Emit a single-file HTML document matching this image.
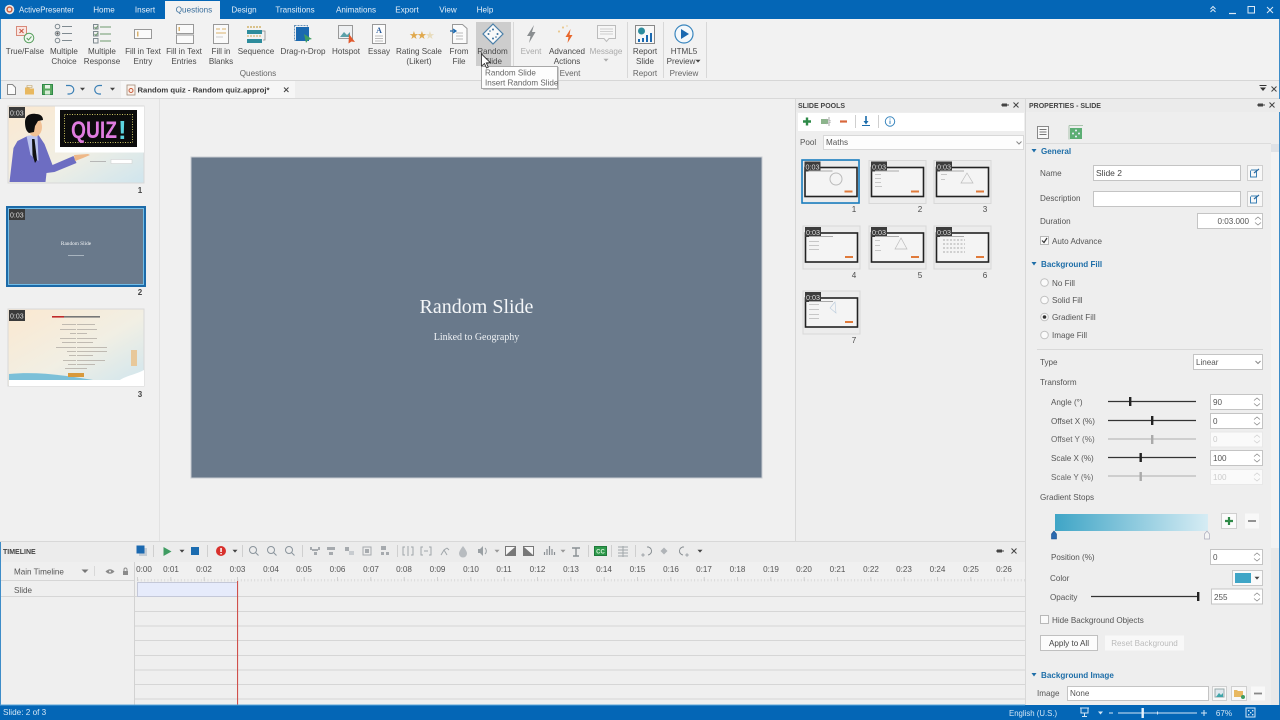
<!DOCTYPE html>
<html><head><meta charset="utf-8"><title>ActivePresenter</title>
<style>
html,body{margin:0;padding:0;width:1280px;height:720px;overflow:hidden;background:#eee}
svg{display:block;position:absolute;left:0;top:0;filter:blur(.35px)}
text{font-family:"Liberation Sans",sans-serif;font-size:8.1px;fill:#4a4a4a}
.c{text-anchor:middle}.r{text-anchor:end}
.w{fill:#e4eef8}.d{fill:#aaa}.b{font-weight:bold;fill:#1e6ea8}.h{font-weight:bold;font-size:7px;fill:#444}
.in{fill:#fff;stroke:#c4c4c4;stroke-width:1}.dis{fill:#fafafa;stroke:#e8e8e8}
.ln{stroke:#555;stroke-width:1;fill:none}.tl{stroke:#d6d6d6;stroke-width:1}
.ic{stroke:#7f8a90;stroke-width:1;fill:none}
</style></head><body>
<svg width="1280" height="720" viewBox="0 0 1280 720" xmlns="http://www.w3.org/2000/svg">
<defs>
<linearGradient id="gr" x1="0" x2="1" y1="0" y2="0"><stop offset="0" stop-color="#3fa5c6"/><stop offset="1" stop-color="#d6ecf4"/></linearGradient>
<linearGradient id="tg" x1="0" x2="1" y1="0" y2="1"><stop offset="0" stop-color="#fbe8d0"/><stop offset=".55" stop-color="#f1efe4"/><stop offset="1" stop-color="#cfe5ee"/></linearGradient>
<pattern id="tk" x="137.5" y="576" width="3.333" height="6" patternUnits="userSpaceOnUse"><rect x="0" y="3" width="1" height="2.500" fill="#dadada"/></pattern>
<g id="pt"><rect x="0" y="0" width="57" height="43" fill="#ececec" stroke="#d8d8d8"/><rect x="2.500" y="7" width="52" height="29" fill="#f4f4f4" stroke="#222" stroke-width="1.600"/><rect x="2" y="1" width="16" height="10" fill="#3c3c3c"/><text x="3" y="9" style="font-size:7.200px;fill:#ddd">0:03</text><rect x="6" y="10" width="24" height="1" fill="#aaa"/><rect x="42" y="30" width="8" height="2" fill="#e07a3a"/></g>
<g id="sp"><path d="M-3 -1.500l3 -2.500 3 2.500M-3 1.500l3 2.500 3 -2.500" fill="none" stroke="#888" stroke-width=".8"/></g>
<g id="dd"><path d="M-2.500 -1.200h5l-2.500 2.800z" fill="#444"/></g>
</defs>

<rect width="1280" height="720" fill="#eeeeee"/>
<rect x="0" y="0" width="1280" height="19" fill="#0466b6"/>
<rect x="0" y="19" width="1280" height="61" fill="#f2f2f2"/>
<rect x="0" y="80" width="1280" height="1" fill="#d6d6d6"/>
<rect x="0" y="81" width="1280" height="17" fill="#eeeeee"/>
<rect x="0" y="98" width="1280" height="1" fill="#d8d8d8"/>
<rect x="165" y="1" width="55" height="19" fill="#f2f2f2"/>
<rect x="0" y="19" width="1" height="686" fill="#3d8cc8"/><rect x="1279" y="19" width="1" height="686" fill="#3d8cc8"/>

<!-- title -->
<circle cx="9.500" cy="9.500" r="4.800" fill="#e9e4e2"/><circle cx="9.500" cy="9.500" r="2.400" fill="none" stroke="#c85a3a" stroke-width="1.400"/>
<text x="19" y="12.500" class="w" textLength="55" lengthAdjust="spacingAndGlyphs">ActivePresenter</text>
<text x="104" y="12.500" class="w c">Home</text><text x="145" y="12.500" class="w c">Insert</text><text x="194" y="12.500" class="c" style="fill:#3a6f9c">Questions</text><text x="244" y="12.500" class="w c">Design</text><text x="295" y="12.500" class="w c">Transitions</text><text x="356" y="12.500" class="w c">Animations</text><text x="407" y="12.500" class="w c">Export</text><text x="448" y="12.500" class="w c">View</text><text x="485" y="12.500" class="w c">Help</text>
<path d="M1210.500 9l2.500 -2.500 2.500 2.500M1210.500 12l2.500 -2.500 2.500 2.500" fill="none" stroke="#dce9f5" stroke-width="1"/>
<path d="M1229 13.500h7" stroke="#dce9f5" stroke-width="1.200"/>
<rect x="1248" y="6.500" width="6.500" height="6.500" fill="none" stroke="#dce9f5"/>
<path d="M1267 7l6 6M1273 7l-6 6" stroke="#dce9f5" stroke-width="1"/>

<!-- ribbon highlight -->
<rect x="476" y="22" width="35" height="44" fill="#cdcdcd"/>

<!-- ribbon icons -->
<rect x="16.500" y="26.500" width="10" height="9" fill="#f9e6e2" stroke="#d88a7a"/><path d="M19.500 29l4 4M23.500 29l-4 4" stroke="#c8503c"/><circle cx="29" cy="38" r="4.800" fill="#eef6ee" stroke="#5aa060"/><path d="M26.700 38l1.800 2 3 -3.500" fill="none" stroke="#5aa060"/>
<g class="ic"><circle cx="57.500" cy="26.500" r="2.300"/><circle cx="57.500" cy="33.500" r="2.300"/><circle cx="57.500" cy="40.500" r="2.300"/><path d="M62 26.500h10M62 33.500h10M62 40.500h10"/></g><circle cx="57.500" cy="33.500" r="1.200" fill="#555"/>
<g class="ic"><rect x="93.500" y="24.500" width="4.500" height="4.500"/><rect x="93.500" y="31.500" width="4.500" height="4.500"/><rect x="93.500" y="38.500" width="4.500" height="4.500"/><path d="M100 27h11M100 34h11M100 41h11M94.500 27l1.500 1.500 2 -3M94.500 34l1.500 1.500 2 -3" stroke="#6f9a6f"/></g>
<rect x="134.500" y="29.500" width="17" height="9" fill="#fafafa" stroke="#999"/><rect x="137" y="31.500" width="1.500" height="5" fill="#d9b26c"/>
<rect x="176.500" y="24.500" width="17" height="9" fill="#fafafa" stroke="#999"/><rect x="176.500" y="35" width="17" height="8.500" fill="#fafafa" stroke="#999"/><rect x="178.500" y="27" width="1.500" height="4" fill="#d9b26c"/>
<rect x="213.500" y="24.500" width="15" height="19" fill="#fafafa" stroke="#999"/><path d="M216 29h4M222 29h4M216 33h10" stroke="#d9b26c"/><path d="M216 37h7" stroke="#ccc"/>
<path d="M247 27h15" stroke="#d9c28c" stroke-width="2" stroke-dasharray="2 1"/><rect x="247" y="30" width="15" height="4" fill="#2d8c9c"/><path d="M247 36h15" stroke="#d9c28c" stroke-width="1.500" stroke-dasharray="2 1"/><rect x="247" y="39" width="15" height="4" fill="#2d8c9c"/><path d="M262 31h3v9h-2" fill="none" stroke="#888" stroke-width=".8"/>
<rect x="294.500" y="25.500" width="13" height="15" fill="none" stroke="#6a93b8" stroke-dasharray="2 1"/><rect x="296" y="27" width="13" height="14" fill="#1b69b0"/><path d="M304 34l8 5 -4 1 -2 3z" fill="#3f9c62"/>
<rect x="338.500" y="25.500" width="14" height="13" fill="#eef0f2" stroke="#999"/><path d="M340 37l4 -5 3 3 3 -3v5z" fill="#5aa0a8"/><path d="M349 34l6 8 -3.500 -.5 -3 2z" fill="#e0582c"/>
<rect x="372.500" y="24.500" width="13" height="19" fill="#fcfcfc" stroke="#999"/><text x="379" y="33" class="c" style="font:bold 8px 'Liberation Serif',serif;fill:#2c5d9c">A</text><path d="M375 36h8M375 38.500h8M375 41h8" stroke="#bbb"/>
<text x="409" y="39" style="font-size:11px;fill:#e0a84c">★</text><text x="417" y="39" style="font-size:11px;fill:#e0a84c">★</text><text x="425" y="39" style="font-size:11px;fill:#e8dcbc">★</text>
<path d="M452.500 24.500h10l4.500 4v15h-14.500z" fill="#fbfbfb" stroke="#999"/><path d="M456 33h7M456 36h7M456 39h7" stroke="#bbb"/><path d="M450 31h6M453 29l3 2 -3 2" fill="none" stroke="#1b69b0" stroke-width="1.200"/>
<path d="M493 24l10 10 -10 10 -10 -10z" fill="#f8f8f8" stroke="#4a7fa8" stroke-width="1.200"/><circle cx="493" cy="29.500" r="1" fill="#3a6f9c"/><circle cx="488.500" cy="34" r="1" fill="#3a6f9c"/><circle cx="497.500" cy="34" r="1" fill="#3a6f9c"/><circle cx="493" cy="38.500" r="1" fill="#3a6f9c"/><circle cx="490" cy="31" r=".8" fill="#3a6f9c"/><circle cx="496" cy="37" r=".8" fill="#3a6f9c"/>
<path d="M534 25l-7 11h3.500l-1.500 7 6.500 -11h-3.500z" fill="#8a8e90"/>
<path d="M570.500 29l-5 8h3l-1 6 5 -8h-3z" fill="#e8672c"/><path d="M563 26l1 1.500 -1 1.500 -1 -1.500zM559 30l1 1.500 -1 1.500 -1 -1.500zM567 25l.7 1 -.7 1 -.7 -1z" fill="#e8c07c"/>
<path d="M597.500 25.500h18v13h-6.500l-2.500 3 -2.500 -3h-6.500z" fill="#f6f6f6" stroke="#bcbcbc"/><path d="M600 29h13M600 31.500h13M600 34h13" stroke="#cfcfcf"/>
<rect x="635.500" y="25.500" width="19" height="18" fill="#f8f8f8" stroke="#888"/><circle cx="641.500" cy="31" r="3.500" fill="#2d8c9c"/><rect x="638" y="39" width="2" height="3" fill="#1b69b0"/><rect x="642" y="38" width="2" height="4" fill="#1b69b0"/><rect x="646" y="35" width="2" height="7" fill="#1b69b0"/><rect x="650" y="33" width="2" height="9" fill="#1b69b0"/>
<circle cx="684" cy="34" r="9" fill="#f4f8fb" stroke="#3a86be" stroke-width="1.200"/><path d="M681 29l8 5 -8 5z" fill="#1b69b0"/>

<!-- ribbon labels -->
<text x="25" y="54" class="c">True/False</text>
<text x="64" y="54" class="c">Multiple</text><text x="64" y="64" class="c">Choice</text>
<text x="102" y="54" class="c">Multiple</text><text x="102" y="64" class="c">Response</text>
<text x="143" y="54" class="c">Fill in Text</text><text x="143" y="64" class="c">Entry</text>
<text x="184" y="54" class="c">Fill in Text</text><text x="184" y="64" class="c">Entries</text>
<text x="221" y="54" class="c">Fill in</text><text x="221" y="64" class="c">Blanks</text>
<text x="256" y="54" class="c">Sequence</text>
<text x="303" y="54" class="c">Drag-n-Drop</text>
<text x="346" y="54" class="c">Hotspot</text>
<text x="379" y="54" class="c">Essay</text>
<text x="419" y="54" class="c">Rating Scale</text><text x="419" y="64" class="c">(Likert)</text>
<text x="459" y="54" class="c">From</text><text x="459" y="64" class="c">File</text>
<text x="492.500" y="54" class="c">Random</text><text x="493" y="64" class="c">Slide</text>
<text x="531" y="54" class="c d">Event</text>
<text x="567" y="54" class="c">Advanced</text><text x="567" y="64" class="c">Actions</text>
<text x="606" y="54" class="c d">Message</text><use href="#dd" x="606" y="60" opacity=".4"/>
<text x="645" y="54" class="c">Report</text><text x="645" y="64" class="c">Slide</text>
<text x="684" y="54" class="c">HTML5</text><text x="681" y="64" class="c">Preview</text><use href="#dd" x="698" y="61"/>
<text x="258" y="76" class="c" style="fill:#666">Questions</text><text x="570" y="76" class="c" style="fill:#666">Event</text><text x="645" y="76" class="c" style="fill:#666">Report</text><text x="684" y="76" class="c" style="fill:#666">Preview</text>
<g stroke="#d8d8d8"><path d="M513.500 22v56M627.500 22v56M663.500 22v56M706.500 22v56"/></g>

<!-- quick bar -->
<path d="M7.500 84.500h5l3 3v7h-8z" fill="#fbfbfb" stroke="#888"/>
<path d="M25 87.500h4l1 1h4v6h-9z" fill="#e8b860"/><path d="M27 85.500h5v2h-5z" fill="#f6f0e0" stroke="#b89a60" stroke-width=".6"/>
<rect x="42.500" y="84.500" width="10" height="10" fill="#5aa860" stroke="#2f8a48"/><rect x="45" y="85" width="5" height="3.500" fill="#e6f3e6"/><rect x="45" y="90.500" width="5" height="4" fill="#d6ecd6"/>
<path d="M66 85.500h3.500a4 4 0 0 1 0 8.500h-2" fill="none" stroke="#3a7fb5" stroke-width="1.200"/><use href="#dd" x="82.500" y="89"/>
<path d="M102 85.500h-3a4 4 0 0 0 0 8.500h2" fill="none" stroke="#3a7fb5" stroke-width="1.200"/><use href="#dd" x="112.500" y="89"/>
<rect x="121" y="81" width="174" height="17" fill="#f6f6f6"/>
<rect x="127" y="85" width="8" height="10" fill="#fbf3ec" stroke="#a08a78" stroke-width=".8"/><circle cx="131" cy="90.500" r="2" fill="none" stroke="#c85a3a"/>
<text x="137.500" y="92.500" style="font-weight:bold;font-size:7.700px;fill:#3c3c3c">Random quiz - Random quiz.approj*</text>
<path d="M284 87.500l4.500 4.500M288.500 87.500l-4.500 4.500" stroke="#444" stroke-width="1"/>
<path d="M1260 87.500h6l-3 3.500z" fill="#333"/><path d="M1259.500 85.500h7" stroke="#333"/><path d="M1271.500 86.500l5 5M1276.500 86.500l-5 5" stroke="#444"/>

<!-- panels -->
<rect x="0" y="99" width="159" height="442" fill="#f0f0f0"/>
<rect x="160" y="99" width="635" height="442" fill="#f0f0f0"/>
<rect x="159" y="99" width="1" height="442" fill="#e2e2e2"/>
<rect x="795" y="99" width="1" height="442" fill="#d8d8d8"/>
<rect x="1025" y="99" width="1" height="606" fill="#d8d8d8"/>

<!-- slide -->
<rect x="191" y="157" width="571" height="321" fill="#69798b" stroke="#c8ccd2"/>
<text x="476.500" y="313" class="c" style="font:20px 'Liberation Serif',serif;fill:#f4f6f8">Random Slide</text>
<text x="476.500" y="340" class="c" style="font:10px 'Liberation Serif',serif;fill:#eef1f4">Linked to Geography</text>

<!-- thumb 1 -->
<rect x="8" y="106" width="136" height="77" fill="url(#tg)" stroke="#d8d8d8"/>
<rect x="55" y="106.500" width="89" height="46" fill="#fff"/>
<rect x="60" y="110" width="77" height="37" fill="#0c0c0c"/>
<rect x="64.500" y="114.500" width="68" height="28" fill="none" stroke="#c8c060" stroke-dasharray="1 1.500"/>
<text x="71" y="138" style="font:bold 24px 'Liberation Sans',sans-serif;fill:#e07ce0" textLength="46" lengthAdjust="spacingAndGlyphs">QUIZ</text>
<text x="118" y="139" style="font:bold 26px 'Liberation Sans',sans-serif;fill:#5cd4e0">!</text>
<path d="M9.500 182l4 -34 4 -7 10 -5 11 -1 6 9 8 21 21 -9 3 7 -22 9 -8 1 -1 9z" fill="#6d6dc2"/>
<path d="M26.500 136l11 -1 1 26 -8 -6z" fill="#bcc4ee"/>
<path d="M32 139l2.500 0 2.500 21 -2 3 -2.500 -8z" fill="#111"/>
<ellipse cx="35" cy="127" rx="7" ry="9.500" fill="#f2c296"/>
<path d="M25 122c0 -7 6 -9 11 -8 5 0 7 3 7 6l-5 1 -3 5 -1 6 -5 1c-3 -2 -4 -6 -4 -11z" fill="#0e0e0e"/>
<path d="M74 155l14 -1 2 1 -7 3 -8 3z" fill="#eeb888"/>
<rect x="111" y="159.500" width="21" height="4" fill="#fff" stroke="#ccc" stroke-width=".5"/><rect x="90" y="161" width="16" height=".8" fill="#aaa"/>
<rect x="9" y="107" width="16" height="11" fill="#3a3a3a"/><text x="10" y="115.500" style="font-size:7px;fill:#ddd">0:03</text>
<text x="140" y="193" class="c" style="fill:#444;font-weight:bold;font-size:8px">1</text>

<!-- thumb 2 -->
<rect x="7" y="207" width="138" height="79" fill="#69798b" stroke="#1c6aa8" stroke-width="2"/><rect x="8.500" y="208.500" width="135" height="76" fill="none" stroke="#72bce6"/>
<text x="76" y="245" class="c" style="font:5.300px 'Liberation Serif',serif;fill:#f4f6f8">Random Slide</text><rect x="68" y="255" width="16" height=".8" fill="#b8c2cc"/>
<rect x="9" y="209" width="16" height="11" fill="#3a3a3a"/><text x="10" y="217.500" style="font-size:7px;fill:#ddd">0:03</text>
<text x="140" y="295" class="c" style="fill:#444;font-weight:bold;font-size:8px">2</text>

<!-- thumb 3 -->
<rect x="8" y="309" width="136" height="77" fill="url(#tg)" stroke="#d8d8d8"/>
<path d="M9 374c30 -3 60 2 90 7l-90 -1z" fill="#7cc0d8"/><path d="M9 380h135v6H9z" fill="#fff"/><path d="M115 385c4 -8 20 -10 29 -15v16h-29z" fill="#fff"/>
<rect x="52" y="316" width="12" height="1.600" fill="#c02a2a"/><rect x="64" y="316" width="36" height="1.600" fill="#777"/>
<g fill="#b4aea6"><rect x="62" y="324" width="14" height=".8"/><rect x="77" y="324" width="18" height=".8"/><rect x="60" y="329" width="16" height=".8"/><rect x="77" y="329" width="20" height=".8"/><rect x="70" y="333" width="6" height=".8"/><rect x="77" y="333" width="10" height=".8"/><rect x="60" y="338" width="16" height=".8"/><rect x="77" y="338" width="20" height=".8"/><rect x="62" y="342" width="14" height=".8"/><rect x="77" y="342" width="16" height=".8"/><rect x="56" y="347" width="20" height=".8"/><rect x="77" y="347" width="30" height=".8"/><rect x="67" y="351" width="9" height=".8"/><rect x="77" y="351" width="30" height=".8"/><rect x="69" y="355" width="7" height=".8"/><rect x="77" y="355" width="16" height=".8"/><rect x="63" y="360" width="13" height=".8"/><rect x="77" y="360" width="28" height=".8"/><rect x="68" y="364" width="8" height=".8"/><rect x="77" y="364" width="18" height=".8"/><rect x="65" y="368" width="22" height=".8"/></g>
<rect x="68" y="373" width="16" height="4" fill="#d89a3c"/><rect x="131" y="350" width="6" height="16" fill="#e8c89a"/>
<rect x="9" y="310" width="16" height="11" fill="#3a3a3a"/><text x="10" y="318.500" style="font-size:7px;fill:#ddd">0:03</text>
<text x="140" y="397" class="c" style="fill:#444;font-weight:bold;font-size:8px">3</text>

<!-- slide pools -->
<rect x="796" y="99" width="229" height="13" fill="#ebebeb"/>
<text x="798" y="108" class="h">SLIDE POOLS</text>
<rect x="1002" y="103.500" width="5" height="3" fill="#444"/><path d="M1001 105h8" stroke="#444"/>
<path d="M1013.500 102.500l5 5M1018.500 102.500l-5 5" stroke="#444"/>
<rect x="798" y="113" width="226" height="18" fill="#fff"/>
<path d="M807 117.500v8M803 121.500h8" stroke="#2f8a48" stroke-width="2.400"/>
<rect x="821" y="119" width="7" height="5" fill="#8cb48c"/><path d="M829 117v9" stroke="#aaa"/><path d="M826 119l5 2M826 124l5 -2" stroke="#aaa" stroke-width=".6"/>
<path d="M840 121.500h7" stroke="#d8673c" stroke-width="2.200"/>
<path d="M855.500 115v13" stroke="#cfcfcf"/><path d="M878.500 115v13" stroke="#cfcfcf"/>
<path d="M866 116v7" stroke="#1b6cab" stroke-width="1.600"/><path d="M863.500 121h5l-2.500 3.500z" fill="#1b6cab"/><path d="M862 125.500h8" stroke="#1b6cab"/>
<circle cx="890" cy="121.500" r="4.700" fill="none" stroke="#3a86be"/><path d="M890 120.500v3.500M890 118.500v1" stroke="#3a86be"/>
<text x="800" y="145" style="fill:#555">Pool</text>
<rect x="823.500" y="135.500" width="200" height="14" fill="#fdfdfd" stroke="#d8d8d8"/><text x="826" y="145" style="fill:#555">Maths</text><path d="M1016.500 141.500l2.500 2.500 2.500 -2.500" fill="none" stroke="#888"/>
<use href="#pt" x="802.500" y="160.500"/><rect x="802" y="160" width="57" height="43" fill="none" stroke="#1b7fc0" stroke-width="1.600"/>
<use href="#pt" x="869" y="160.500"/><use href="#pt" x="934" y="160.500"/>
<use href="#pt" x="803" y="226"/><use href="#pt" x="869" y="226"/><use href="#pt" x="934" y="226"/>
<use href="#pt" x="803" y="291"/>
<circle cx="836" cy="179" r="6" fill="none" stroke="#bbb"/><path d="M967 173l-6 10h12z" fill="none" stroke="#bbb" stroke-width=".7"/><path d="M901 238l-6 11h12z" fill="none" stroke="#bbb" stroke-width=".7"/>
<g fill="#bcbcbc"><rect x="941" y="174" width="6" height=".8"/><rect x="941" y="179" width="4" height=".8"/><rect x="875" y="174" width="6" height=".8"/><rect x="875" y="178" width="6" height=".8"/><rect x="875" y="182" width="6" height=".8"/><rect x="875" y="186" width="7" height=".8"/><rect x="809" y="241" width="10" height=".8"/><rect x="809" y="245" width="10" height=".8"/><rect x="809" y="249" width="10" height=".8"/><rect x="875" y="240" width="5" height=".8"/><rect x="875" y="245" width="5" height=".8"/><rect x="875" y="250" width="6" height=".8"/><rect x="809" y="304" width="10" height=".8"/><rect x="809" y="309" width="10" height=".8"/><rect x="809" y="314" width="10" height=".8"/><rect x="809" y="318" width="10" height=".8"/></g>
<path d="M943 240h22M943 244h22M943 248h22M943 252h22" stroke="#aaa" stroke-width="1" stroke-dasharray="2 1.500"/>
<path d="M835 302l-5 6 6 5z" fill="none" stroke="#bcd" stroke-width=".6"/>
<g style="fill:#444"><text x="854" y="212" class="c">1</text><text x="920" y="212" class="c">2</text><text x="985" y="212" class="c">3</text><text x="854" y="278" class="c">4</text><text x="920" y="278" class="c">5</text><text x="985" y="278" class="c">6</text><text x="854" y="343" class="c">7</text></g>

<!-- properties -->
<rect x="1026" y="99" width="254" height="13" fill="#ebebeb"/>
<text x="1029" y="108" class="h">PROPERTIES - SLIDE</text>
<rect x="1258" y="103.500" width="5" height="3" fill="#444"/><path d="M1257 105h8" stroke="#444"/>
<path d="M1269.500 102.500l5 5M1274.500 102.500l-5 5" stroke="#444"/>
<rect x="1037.500" y="126.500" width="11" height="12" fill="#f9f9f9" stroke="#888"/><path d="M1039.500 129.500h7M1039.500 132h7M1039.500 134.500h7" stroke="#777"/>
<rect x="1070" y="128" width="12" height="11" fill="#5cae74"/><path d="M1069 125.500h14M1069 125.500v14" stroke="#aac4ae"/><circle cx="1076" cy="130.500" r="1" fill="#eef"/><circle cx="1073" cy="133.500" r="1" fill="#eef"/><circle cx="1079" cy="133.500" r="1" fill="#eef"/><circle cx="1076" cy="136.500" r="1" fill="#eef"/>
<path d="M1026 143.500h245" stroke="#dcdcdc"/>
<rect x="1271" y="144" width="8" height="561" fill="#e9e9e9"/><rect x="1271" y="152" width="8" height="396" fill="#f3f3f3"/><rect x="1271" y="144" width="8" height="8" fill="#dfe2e6"/>

<path d="M1031.500 149h5l-2.500 3.500z" fill="#1e6ea8"/><text x="1041" y="154" class="b">General</text>
<text x="1040" y="176" style="fill:#555">Name</text><rect x="1093.500" y="165.500" width="147" height="15" class="in"/><text x="1096" y="176" style="fill:#444;font-size:8.500px">Slide 2</text>
<rect x="1247.500" y="165.500" width="15" height="15" fill="#f8f8f8" stroke="#cfcfcf"/><path d="M1251 170h5.500v7h-6v-6.500" fill="none" stroke="#3a7fb5"/><path d="M1254 173l5 -4" stroke="#2a6aa0" stroke-width="1.200"/>
<text x="1040" y="201" style="fill:#555">Description</text><rect x="1093.500" y="191.500" width="147" height="15" class="in"/>
<rect x="1247.500" y="191.500" width="15" height="15" fill="#f8f8f8" stroke="#cfcfcf"/><path d="M1251 196h5.500v7h-6v-6.500" fill="none" stroke="#3a7fb5"/><path d="M1254 199l5 -4" stroke="#2a6aa0" stroke-width="1.200"/>
<text x="1040" y="224" style="fill:#555">Duration</text><rect x="1197.500" y="213.500" width="65" height="15" class="in"/><text x="1249" y="224" class="r" style="fill:#555">0:03.000</text><use href="#sp" x="1258" y="221"/>
<rect x="1040.500" y="236.500" width="8" height="8" fill="#fafafa" stroke="#b8b8b8"/><path d="M1042 240.500l2 2 3 -4.500" fill="none" stroke="#333" stroke-width="1.200"/><text x="1052" y="244" style="fill:#555">Auto Advance</text>
<path d="M1031.500 262h5l-2.500 3.500z" fill="#1e6ea8"/><text x="1041" y="267" class="b">Background Fill</text>
<g fill="#fafafa" stroke="#c0c0c0"><circle cx="1044.500" cy="282.500" r="3.800"/><circle cx="1044.500" cy="300" r="3.800"/><circle cx="1044.500" cy="317" r="3.800"/><circle cx="1044.500" cy="335" r="3.800"/></g><circle cx="1044.500" cy="317" r="1.800" fill="#333"/>
<text x="1052" y="286" style="fill:#555">No Fill</text><text x="1052" y="303" style="fill:#555">Solid Fill</text><text x="1052" y="320" style="fill:#555">Gradient Fill</text><text x="1052" y="338" style="fill:#555">Image Fill</text>
<path d="M1037 349.500h226" stroke="#d8d8d8"/>
<text x="1040" y="365" style="fill:#555">Type</text><rect x="1193.500" y="354.500" width="69" height="15" class="in"/><text x="1196" y="365" style="fill:#555">Linear</text><path d="M1255.500 361l2.500 2.500 2.500 -2.500" fill="none" stroke="#888"/>
<text x="1040" y="385" style="fill:#555">Transform</text>

<text x="1051" y="405" style="fill:#555">Angle (°)</text><path d="M1108 401.500h88" stroke="#333" stroke-width="1.200"/><rect x="1129" y="397" width="2.400" height="9" fill="#222"/><rect x="1210.500" y="394.500" width="52" height="15" class="in"/><text x="1213" y="405" style="fill:#555">90</text><use href="#sp" x="1257" y="402"/>
<text x="1051" y="424" style="fill:#555">Offset X (%)</text><path d="M1108 420.500h88" stroke="#333" stroke-width="1.200"/><rect x="1151" y="416" width="2.400" height="9" fill="#222"/><rect x="1210.500" y="413.500" width="52" height="15" class="in"/><text x="1213" y="424" style="fill:#555">0</text><use href="#sp" x="1257" y="421"/>
<text x="1051" y="442" style="fill:#666">Offset Y (%)</text><path d="M1108 439h88" stroke="#bbb" stroke-width="1.200"/><rect x="1151" y="435" width="2.400" height="9" fill="#aaa"/><rect x="1210.500" y="432" width="52" height="15" class="dis"/><text x="1213" y="442" style="fill:#ccc">0</text><use href="#sp" x="1257" y="439" opacity=".35"/>
<text x="1051" y="461" style="fill:#555">Scale X (%)</text><path d="M1108 457.500h88" stroke="#333" stroke-width="1.200"/><rect x="1139.500" y="453" width="2.400" height="9" fill="#222"/><rect x="1210.500" y="450.500" width="52" height="15" class="in"/><text x="1213" y="461" style="fill:#555">100</text><use href="#sp" x="1257" y="458"/>
<text x="1051" y="480" style="fill:#666">Scale Y (%)</text><path d="M1108 476h88" stroke="#bbb" stroke-width="1.200"/><rect x="1139.500" y="472" width="2.400" height="9" fill="#aaa"/><rect x="1210.500" y="469.500" width="52" height="15" class="dis"/><text x="1213" y="480" style="fill:#ccc">100</text><use href="#sp" x="1257" y="477" opacity=".35"/>

<text x="1040" y="500" style="fill:#555">Gradient Stops</text>
<rect x="1055" y="514" width="153" height="17" fill="url(#gr)"/>
<path d="M1051.500 539v-5l2.500 -3 2.500 3v5z" fill="#2a6ab0" stroke="#1c4f8c" stroke-width=".6"/>
<path d="M1204.500 539v-5l2.500 -3 2.500 3v5z" fill="#f4f4f4" stroke="#aab" stroke-width=".7"/>
<rect x="1221.500" y="513.500" width="15" height="15" fill="#fbfbfb" stroke="#cfcfcf"/><path d="M1229 517v8M1225 521h8" stroke="#2f8a48" stroke-width="2.200"/>
<rect x="1245" y="513.500" width="14" height="15" fill="#f8f8f8"/><path d="M1248 521h8" stroke="#888" stroke-width="1.800"/>
<text x="1051" y="560" style="fill:#555">Position (%)</text><rect x="1210.500" y="549.500" width="52" height="15" class="in"/><text x="1213" y="560" style="fill:#555">0</text><use href="#sp" x="1257" y="557"/>
<text x="1050" y="581" style="fill:#555">Color</text><rect x="1232.500" y="570.500" width="30" height="15" fill="#fafafa" stroke="#c8c8c8"/><rect x="1235" y="573" width="16" height="10" fill="#3fa5c6"/><use href="#dd" x="1257" y="578"/>
<text x="1050" y="600" style="fill:#555">Opacity</text><path d="M1091 596.500h107" stroke="#333" stroke-width="1.200"/><rect x="1197" y="592" width="2.400" height="9" fill="#222"/><rect x="1211.500" y="589" width="51" height="15" class="in"/><text x="1214" y="600" style="fill:#555">255</text><use href="#sp" x="1257" y="597"/>
<rect x="1040.500" y="615.500" width="8" height="8" fill="#fafafa" stroke="#b8b8b8"/><text x="1052" y="623" style="fill:#555">Hide Background Objects</text>
<rect x="1040.500" y="635.500" width="57" height="15" fill="#fcfcfc" stroke="#c0c0c0"/><text x="1069" y="646" class="c" style="fill:#444">Apply to All</text>
<rect x="1105" y="635.500" width="79" height="15" fill="#f8f8f8"/><text x="1144.500" y="646" class="c" style="fill:#bbb">Reset Background</text>
<path d="M1031.500 673h5l-2.500 3.500z" fill="#1e6ea8"/><text x="1041" y="678" class="b">Background Image</text>
<text x="1037" y="696" style="fill:#555">Image</text><rect x="1067.500" y="686.500" width="141" height="14" class="in"/><text x="1070" y="696" style="fill:#555">None</text>
<rect x="1212.500" y="686.500" width="14" height="14" fill="#f8f8f8" stroke="#cfcfcf"/><rect x="1215" y="689" width="9" height="8" fill="#dfe8ee" stroke="#9aa"/><path d="M1216 697l3 -4 2 2 2 -2v4z" fill="#3fa5a8"/>
<rect x="1231.500" y="686.500" width="15" height="14" fill="#f8f8f8" stroke="#cfcfcf"/><path d="M1234 690h3l1 1h5v6h-9z" fill="#e8b860"/><circle cx="1243" cy="697" r="2" fill="#3f9c62"/>
<rect x="1251" y="686.500" width="14" height="14" fill="#f8f8f8"/><path d="M1254 693.500h8" stroke="#888" stroke-width="1.800"/>

<!-- timeline -->
<rect x="0" y="541" width="1025" height="1" fill="#d8d8d8"/>
<rect x="1" y="542" width="1024" height="163" fill="#efefef"/>
<rect x="1" y="542" width="1024" height="20" fill="#ececec"/>
<text x="3" y="554" class="h">TIMELINE</text>
<rect x="139" y="548" width="8" height="8" fill="#c4ccd4"/><rect x="136.500" y="545.500" width="8" height="8" fill="#1b69b0"/>
<path d="M163.500 547l8 4.500 -8 4.500z" fill="#3f9c62"/><use href="#dd" x="182" y="551"/><rect x="191" y="547" width="8" height="8" fill="#1b6cb0"/>
<circle cx="221" cy="551" r="5" fill="#d8302c"/><rect x="220.300" y="548" width="1.500" height="4" fill="#fff"/><rect x="220.300" y="553" width="1.500" height="1.300" fill="#fff"/><use href="#dd" x="235" y="551"/>
<g fill="none" stroke="#8a949c"><circle cx="253" cy="550" r="3.500"/><path d="M255.500 552.500l3 3"/><circle cx="271" cy="550" r="3.500"/><path d="M273.500 552.500l3 3"/><circle cx="289" cy="550" r="3.500"/><path d="M291.500 552.500l3 3"/></g>
<g fill="#a6aaae"><rect x="310" y="547" width="2" height="3"/><rect x="314" y="552" width="3" height="3"/><rect x="318" y="547" width="2" height="3"/><rect x="312" y="549" width="6" height="2"/><rect x="327" y="547" width="8" height="3"/><rect x="329" y="552" width="4" height="3"/><rect x="345" y="547" width="4" height="4"/><rect x="349" y="551" width="5" height="4" fill="#c8ccd0"/><rect x="363" y="547" width="8" height="8" fill="none" stroke="#a6aaae"/><rect x="365" y="549" width="4" height="4"/><rect x="381" y="546" width="5" height="4"/><rect x="381" y="552" width="3" height="3"/><rect x="386" y="552" width="3" height="3"/></g>
<g fill="none" stroke="#a0a6aa"><path d="M405 547h-2v8h2M411 547h2v8h-2M408 546v10"/><path d="M423 547h-2v8h2M429 547h2v8h-2M424 551h4"/><path d="M441 555l3 -5 3 -2M447 548l2 2M444 550l3 5"/></g>
<path d="M463 546c-3 4 -4 6 -4 7.500a4 4 0 0 0 8 0c0 -1.500 -1 -3.500 -4 -7.500z" fill="#b8bcc0"/>
<path d="M478 549h2l3 -3v10l-3 -3h-2z" fill="#9aa0a4"/><path d="M485 548a4 4 0 0 1 0 6" fill="none" stroke="#9aa0a4"/><use href="#dd" x="497" y="551" opacity=".5"/>
<rect x="505.500" y="546.500" width="10" height="9" fill="#f6f6f6" stroke="#777"/><path d="M506 555l9 -8v8z" fill="#777"/>
<rect x="523.500" y="546.500" width="10" height="9" fill="#f6f6f6" stroke="#777"/><path d="M524 547l9 8h-9z" fill="#777"/>
<path d="M544.500 555v-3M547 555v-6M549.500 555v-9M552 555v-6M554.500 555v-3" stroke="#8a9094" stroke-width="1.200"/><use href="#dd" x="563" y="551" opacity=".5"/>
<path d="M572 548h8M576 548v8M573 556h6" stroke="#8a9094" stroke-width="1.400"/>
<rect x="594.500" y="546.500" width="12" height="9" fill="#2e9a4c" stroke="#1f7a3a"/><text x="600.500" y="553.500" class="c" style="font:bold 6px 'Liberation Sans',sans-serif;fill:#d4f0d4">CC</text>
<path d="M618 547h10M618 550h10M618 553h10M618 556h10M623 546v11" stroke="#a0a6aa"/>
<path d="M649 547h-2a4 4 0 0 1 1 8" fill="none" stroke="#8a9094"/><path d="M643 553l2 2 -2 2 -2 -2z" fill="#b0b4b8"/>
<path d="M664 547.500l3.500 3.500 -3.500 3.500 -3.500 -3.500z" fill="#b0b4b8"/>
<path d="M682 547h2a4 4 0 0 0 -1 8" fill="none" stroke="#8a9094"/><path d="M687 553l2 2 -2 2 -2 -2z" fill="#b0b4b8"/><use href="#dd" x="700" y="551"/>
<g stroke="#cfcfcf"><path d="M153.500 545v12M207.500 545v12M242.500 545v12M302.500 545v12M397.500 545v12M588.500 545v12M611.500 545v12M635.500 545v12"/></g>
<rect x="997" y="549.500" width="5" height="3" fill="#444"/><path d="M996 551h8" stroke="#444"/>
<path d="M1011.500 548.500l5 5M1016.500 548.500l-5 5" stroke="#444"/>
<text x="14" y="574.500" style="fill:#555">Main Timeline</text><path d="M81.500 569.500h7l-3.500 3.500z" fill="#777"/><path d="M94.500 566v10" stroke="#d8d8d8"/>
<path d="M105.500 571.500q4.500 -4.500 9 0q-4.500 4.500 -9 0z" fill="#8a8a8a"/><circle cx="110" cy="571.500" r="1" fill="#eee"/>
<rect x="123" y="571" width="5" height="4" fill="#8a8a8a"/><path d="M124 571v-1.500a1.500 1.500 0 0 1 3 0v1.500" fill="none" stroke="#8a8a8a"/>
<rect x="137" y="562" width="888" height="20" fill="#f0f0f0"/>
<rect x="137" y="576" width="888" height="6" fill="url(#tk)"/>
<g stroke="#cfcfcf"><path d="M137.500 577v4M170.800 577v4M204.200 577v4M237.500 577v4M270.800 577v4M304.200 577v4M337.500 577v4M370.800 577v4M404.200 577v4M437.500 577v4M470.800 577v4M504.200 577v4M537.500 577v4M570.800 577v4M604.200 577v4M637.500 577v4M670.800 577v4M704.200 577v4M737.500 577v4M770.800 577v4M804.200 577v4M837.500 577v4M870.800 577v4M904.200 577v4M937.500 577v4M970.800 577v4M1004.200 577v4"/></g>
<text x="144" y="572" class="c" style="fill:#555">0:00</text><text x="171" y="572" class="c" style="fill:#555">0:01</text><text x="204" y="572" class="c" style="fill:#555">0:02</text><text x="237.500" y="572" class="c" style="fill:#555">0:03</text><text x="271" y="572" class="c" style="fill:#555">0:04</text><text x="304" y="572" class="c" style="fill:#555">0:05</text><text x="337.500" y="572" class="c" style="fill:#555">0:06</text><text x="371" y="572" class="c" style="fill:#555">0:07</text><text x="404" y="572" class="c" style="fill:#555">0:08</text><text x="437.500" y="572" class="c" style="fill:#555">0:09</text><text x="471" y="572" class="c" style="fill:#555">0:10</text><text x="504" y="572" class="c" style="fill:#555">0:11</text><text x="537.500" y="572" class="c" style="fill:#555">0:12</text><text x="571" y="572" class="c" style="fill:#555">0:13</text><text x="604" y="572" class="c" style="fill:#555">0:14</text><text x="637.500" y="572" class="c" style="fill:#555">0:15</text><text x="671" y="572" class="c" style="fill:#555">0:16</text><text x="704" y="572" class="c" style="fill:#555">0:17</text><text x="737.500" y="572" class="c" style="fill:#555">0:18</text><text x="771" y="572" class="c" style="fill:#555">0:19</text><text x="804" y="572" class="c" style="fill:#555">0:20</text><text x="837.500" y="572" class="c" style="fill:#555">0:21</text><text x="871" y="572" class="c" style="fill:#555">0:22</text><text x="904" y="572" class="c" style="fill:#555">0:23</text><text x="937.500" y="572" class="c" style="fill:#555">0:24</text><text x="971" y="572" class="c" style="fill:#555">0:25</text><text x="1004" y="572" class="c" style="fill:#555">0:26</text>
<path d="M1 580.500h133M1 596.500h1024M134 611.500h891M134 626h891M134 640.500h891M134 655.500h891M134 670h891M134 684.500h891M134 699h891" class="tl" fill="none"/>
<path d="M134.500 562v143" stroke="#d2d2d2"/>
<text x="14" y="593" style="fill:#555">Slide</text>
<rect x="137.500" y="582.500" width="100" height="14" fill="#e6ebfb" stroke="#c4c8d8"/>
<rect x="237" y="581" width="1.100" height="124" fill="#d0504c"/>

<!-- tooltip -->
<rect x="483" y="67" width="76" height="23" fill="#9a9a9a" opacity=".45"/>
<rect x="481.500" y="66.500" width="76" height="22" fill="#fdfdfd" stroke="#a8a8a8"/>
<text x="485" y="75.500" style="fill:#666">Random Slide</text><text x="485" y="85.500" style="fill:#666">Insert Random Slide</text>
<path d="M481.500 54v12l3 -2.500 2 4.500 1.800 -.8 -2 -4.300 4 -.2z" fill="#fff" stroke="#222" stroke-width=".8"/>

<!-- status -->
<rect x="0" y="705" width="1280" height="15" fill="#0466b6"/><rect x="0" y="704.500" width="1025" height="1" fill="#5aa4d8"/>
<text x="3" y="715" style="fill:#d4e6f5;font-size:8.200px">Slide: 2 of 3</text>
<text x="1009" y="716" style="fill:#d4e6f5;font-size:7.800px">English (U.S.)</text>
<g stroke="#d4e6f5" fill="none"><rect x="1081" y="708" width="7" height="5"/><path d="M1084.500 713v3M1082 716.500h5M1080 708h9"/><path d="M1109 713h4M1118 713h79M1201 713h6M1204 710v6M1157.500 711.500v3"/><rect x="1246" y="708" width="9" height="9"/></g>
<path d="M1098 711.500h5l-2.500 3z" fill="#d4e6f5"/><rect x="1141.500" y="708" width="2.400" height="10" fill="#e8f2fa"/>
<text x="1224" y="716" class="c" style="fill:#d4e6f5">67%</text>
<g fill="#d4e6f5"><rect x="1248" y="710" width="1.400" height="1.400"/><rect x="1252" y="710" width="1.400" height="1.400"/><rect x="1250" y="712" width="1.400" height="1.400"/><rect x="1248" y="714" width="1.400" height="1.400"/><rect x="1252" y="714" width="1.400" height="1.400"/></g>
</svg>
</body></html>
